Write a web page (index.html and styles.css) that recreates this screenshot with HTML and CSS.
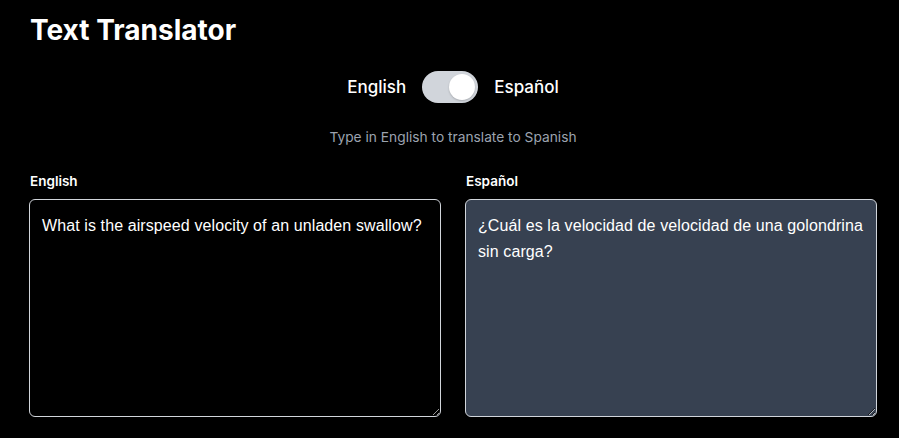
FILE: index.html
```html
<!DOCTYPE html>
<html lang="en">
<head>
<meta charset="utf-8">
<title>Text Translator</title>
<link rel="stylesheet" href="styles.css">
</head>
<body>
<main class="page">
  <h1 class="title">Text Translator</h1>
  <div class="switch-row">
    <span class="lang">English</span>
    <span class="toggle"><span class="knob"></span></span>
    <span class="lang">Español</span>
  </div>
  <p class="hint">Type in English to translate to Spanish</p>
  <div class="panes">
    <div class="pane">
      <label class="label" for="src">English</label>
      <textarea id="src" class="box">What is the airspeed velocity of an unladen swallow?</textarea>
    </div>
    <div class="pane">
      <label class="label" for="dst">Español</label>
      <textarea id="dst" class="box box-out" readonly>¿Cuál es la velocidad de velocidad de una golondrina sin carga?</textarea>
    </div>
  </div>
</main>
</body>
</html>
```
FILE: styles.css
```css
html, body {
  margin: 0;
  background: #000;
  color: #fff;
  font-family: "Liberation Sans", Arial, sans-serif;
}
.page {
  padding: 12px 22px 0 29px;
  display: flex;
  flex-direction: column;
}
.title {
  margin: 0;
  font-family: Inter, "Liberation Sans", sans-serif;
  font-size: 28px;
  font-weight: 700;
  line-height: 36px;
  padding-left: 1px;
}
.switch-row {
  margin-top: 23px;
  display: flex;
  align-items: center;
  justify-content: center;
  gap: 16px;
}
.lang {
  font-family: Inter, "Liberation Sans", sans-serif;
  font-size: 17px;
  font-weight: 500;
}
.toggle {
  width: 56px;
  height: 32px;
  border-radius: 16px;
  background: #d1d5db;
  display: flex;
  align-items: center;
  justify-content: flex-end;
  padding: 0 3px;
  box-sizing: border-box;
}
.knob {
  width: 26px;
  height: 26px;
  border-radius: 50%;
  background: #fff;
  box-shadow: 0 1px 2px rgba(0,0,0,0.2);
}
.hint {
  margin: 26px 0 0;
  text-align: center;
  font-family: Inter, "Liberation Sans", sans-serif;
  font-size: 13.75px;
  color: #9ca3af;
}
.panes {
  margin-top: 26px;
  display: grid;
  grid-template-columns: 1fr 1fr;
  gap: 24px;
}
.pane {
  display: flex;
  flex-direction: column;
}
.label {
  font-family: Inter, "Liberation Sans", sans-serif;
  font-size: 13.5px;
  font-weight: 600;
  line-height: 20px;
  padding-left: 1px;
  margin-bottom: 8px;
}
.box {
  height: 218px;
  box-sizing: border-box;
  border: 1px solid #d1d5db;
  border-radius: 6px;
  background: #000;
  color: #fff;
  font-family: inherit;
  font-size: 16px;
  letter-spacing: 0.1px;
  line-height: 26px;
  padding: 13px 12px 12px;
  resize: vertical;
  outline: none;
}
.box-out {
  background: #374151;
}
```
